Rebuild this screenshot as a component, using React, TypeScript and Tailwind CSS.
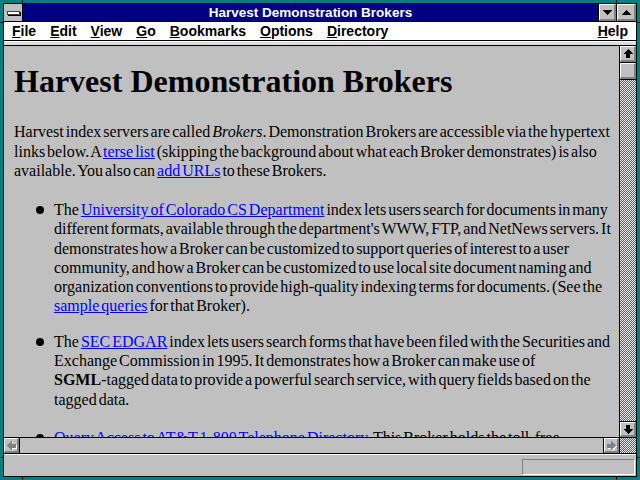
import React from "react";

const raised =
  "bg-[#c0c0c0] border-t border-l border-t-white border-l-white border-b-2 border-r-2 border-b-[#808080] border-r-[#808080]";
const dither =
  "bg-[image:repeating-conic-gradient(#008080_0_25%,#ffffff_0_50%)] bg-[length:2px_2px]";

function Tri({ dir }: { dir: "up" | "down" }) {
  return (
    <svg width="9" height="5" viewBox="0 0 9 5" shapeRendering="crispEdges">
      {dir === "down" ? (
        <polygon points="0,0 9,0 4.5,5" fill="#000" />
      ) : (
        <polygon points="4.5,0 9,5 0,5" fill="#000" />
      )}
    </svg>
  );
}

function Arrow({ dir, disabled }: { dir: "up" | "down" | "left" | "right"; disabled?: boolean }) {
  const rot = { up: 0, right: 90, down: 180, left: 270 }[dir];
  const pts = "6,2 11,7 8,7 8,11 4,11 4,7 1,7";
  return (
    <svg width="12" height="13" viewBox="0 0 12 13" shapeRendering="crispEdges">
      {disabled && (
        <polygon points={pts} fill="#fff" transform={`translate(1 1) rotate(${rot} 6 6.5)`} />
      )}
      <polygon points={pts} fill={disabled ? "#808080" : "#000"} transform={`rotate(${rot} 6 6.5)`} />
    </svg>
  );
}

function A({ children }: { children: React.ReactNode }) {
  return <span className="text-[#0000ff] underline">{children}</span>;
}

const menus = ["File", "Edit", "View", "Go", "Bookmarks", "Options", "Directory"];

function MenuItem({ label }: { label: string }) {
  return (
    <span>
      <u>{label[0]}</u>
      {label.slice(1)}
    </span>
  );
}

function Bullet() {
  return <span className="mt-[6px] mr-[10px] h-[8px] w-[8px] shrink-0 rounded-full bg-black" />;
}

export default function App() {
  return (
    <div className="relative h-[480px] w-[640px] bg-[#008080] p-[3px] font-['Liberation_Sans',sans-serif]">
      <div className="flex h-full flex-col border border-black bg-[#c0c0c0]">
        {/* title bar */}
        <div className="flex h-[18px] shrink-0 border-b border-black bg-[#000080]">
          <div className="flex w-[19px] items-center justify-center border-r border-black bg-[#c0c0c0]">
            <span className="h-[4px] w-[13px] border border-[#404040] bg-white shadow-[1px_1px_0_#000]" />
          </div>
          <div className="flex flex-1 items-center justify-center text-[13.5px] font-bold leading-none text-white">
            Harvest Demonstration Brokers
          </div>
          <div className="flex border-l border-black">
            <div className={`${raised} flex w-[17px] items-center justify-center`}>
              <Tri dir="down" />
            </div>
          </div>
          <div className="flex border-l border-black">
            <div className={`${raised} flex w-[19px] items-center justify-center`}>
              <Tri dir="up" />
            </div>
          </div>
        </div>

        {/* menu bar */}
        <div className="flex h-[19px] shrink-0 items-center border-b border-black bg-white pl-[8px] pr-[8px] text-[14px] font-bold text-black">
          <div className="flex gap-[14px]">
            {menus.map((m) => (
              <MenuItem key={m} label={m} />
            ))}
          </div>
          <div className="ml-auto">
            <MenuItem label="Help" />
          </div>
        </div>

        {/* collapsed toolbar strip */}
        <div className="h-[5px] shrink-0 border-t border-b border-t-white border-b-black bg-[#dcdcdc]" />

        {/* document + vertical scrollbar */}
        <div className="flex min-h-0 flex-1">
          <div className="min-w-0 flex-1 overflow-hidden whitespace-nowrap px-[10px] pt-[17px] font-['Liberation_Serif',serif] text-[16px] text-black">
            <h1 className="text-[32px] font-bold leading-[37px]">Harvest Demonstration Brokers</h1>
            <div className="[word-spacing:-2px]">
              <p className="mt-[22px] leading-[19.5px]">
                Harvest index servers are called <i>Brokers</i>. Demonstration Brokers are accessible via the hypertext
                <br />
                links below. A <A>terse list</A> (skipping the background about what each Broker demonstrates) is also
                <br />
                available. You also can <A>add URLs</A> to these Brokers.
              </p>
              <ul className="mt-[19.5px] pl-[22px] leading-[19.3px]">
                <li className="flex">
                  <Bullet />
                  <div>
                    The <A>University of Colorado CS Department</A> index lets users search for documents in many
                    <br />
                    different formats, available through the department's WWW, FTP, and NetNews servers. It
                    <br />
                    demonstrates how a Broker can be customized to support queries of interest to a user
                    <br />
                    community, and how a Broker can be customized to use local site document naming and
                    <br />
                    organization conventions to provide high-quality indexing terms for documents. (See the
                    <br />
                    <A>sample queries</A> for that Broker).
                  </div>
                </li>
                <li className="mt-[16px] flex">
                  <Bullet />
                  <div>
                    The <A>SEC EDGAR</A> index lets users search forms that have been filed with the Securities and
                    <br />
                    Exchange Commission in 1995. It demonstrates how a Broker can make use of
                    <br />
                    <b>SGML</b>-tagged data to provide a powerful search service, with query fields based on the
                    <br />
                    tagged data.
                  </div>
                </li>
                <li className="mt-[19px] flex">
                  <Bullet />
                  <div>
                    <A>Query Access to AT&amp;T 1-800 Telephone Directory</A>. This Broker holds the toll-free
                    <br />
                    numbers listed in the directory.
                  </div>
                </li>
              </ul>
            </div>
          </div>

          <div className="flex w-[17px] shrink-0 flex-col border-l border-black">
            <div className="border-b border-black">
              <div className={`${raised} flex h-[16px] items-center justify-center`}>
                <Arrow dir="up" />
              </div>
            </div>
            <div className="border-b border-black">
              <div className={`${raised} h-[16px]`} />
            </div>
            <div className={`flex-1 ${dither}`} />
            <div className="border-t border-black">
              <div className={`${raised} flex h-[15px] items-center justify-center`}>
                <Arrow dir="down" />
              </div>
            </div>
          </div>
        </div>

        {/* horizontal scrollbar */}
        <div className="flex h-[16px] shrink-0 border-t border-black">
          <div className="border-r border-black">
            <div className={`${raised} flex h-full w-[15px] items-center justify-center`}>
              <Arrow dir="left" disabled />
            </div>
          </div>
          <div className="flex-1 bg-[#c0c0c0]" />
          <div className="border-l border-black">
            <div className={`${raised} flex h-full w-[15px] items-center justify-center`}>
              <Arrow dir="right" disabled />
            </div>
          </div>
          <div className={`w-[17px] border-l border-black ${dither}`} />
        </div>

        {/* status bar */}
        <div className="flex h-[23px] shrink-0 justify-end border-t border-black">
          <div className="flex flex-1 justify-end border-t border-white pt-[4px] pr-[1px] pb-[1px]">
            <div className="w-[113px] border-t border-l border-t-[#808080] border-l-[#808080] border-b border-r border-b-white border-r-white" />
          </div>
        </div>
      </div>

      {/* frame segment ticks */}
      <div className="absolute left-[22px] top-0 h-[4px] w-px bg-black" />
      <div className="absolute left-[616px] top-0 h-[4px] w-px bg-black" />
      <div className="absolute bottom-0 left-[22px] h-[4px] w-px bg-black" />
      <div className="absolute bottom-0 left-[616px] h-[4px] w-px bg-black" />
      <div className="absolute left-0 top-[22px] h-px w-[4px] bg-black" />
      <div className="absolute right-0 top-[22px] h-px w-[4px] bg-black" />
      <div className="absolute left-0 top-[457px] h-px w-[4px] bg-black" />
      <div className="absolute right-0 top-[457px] h-px w-[4px] bg-black" />
    </div>
  );
}
